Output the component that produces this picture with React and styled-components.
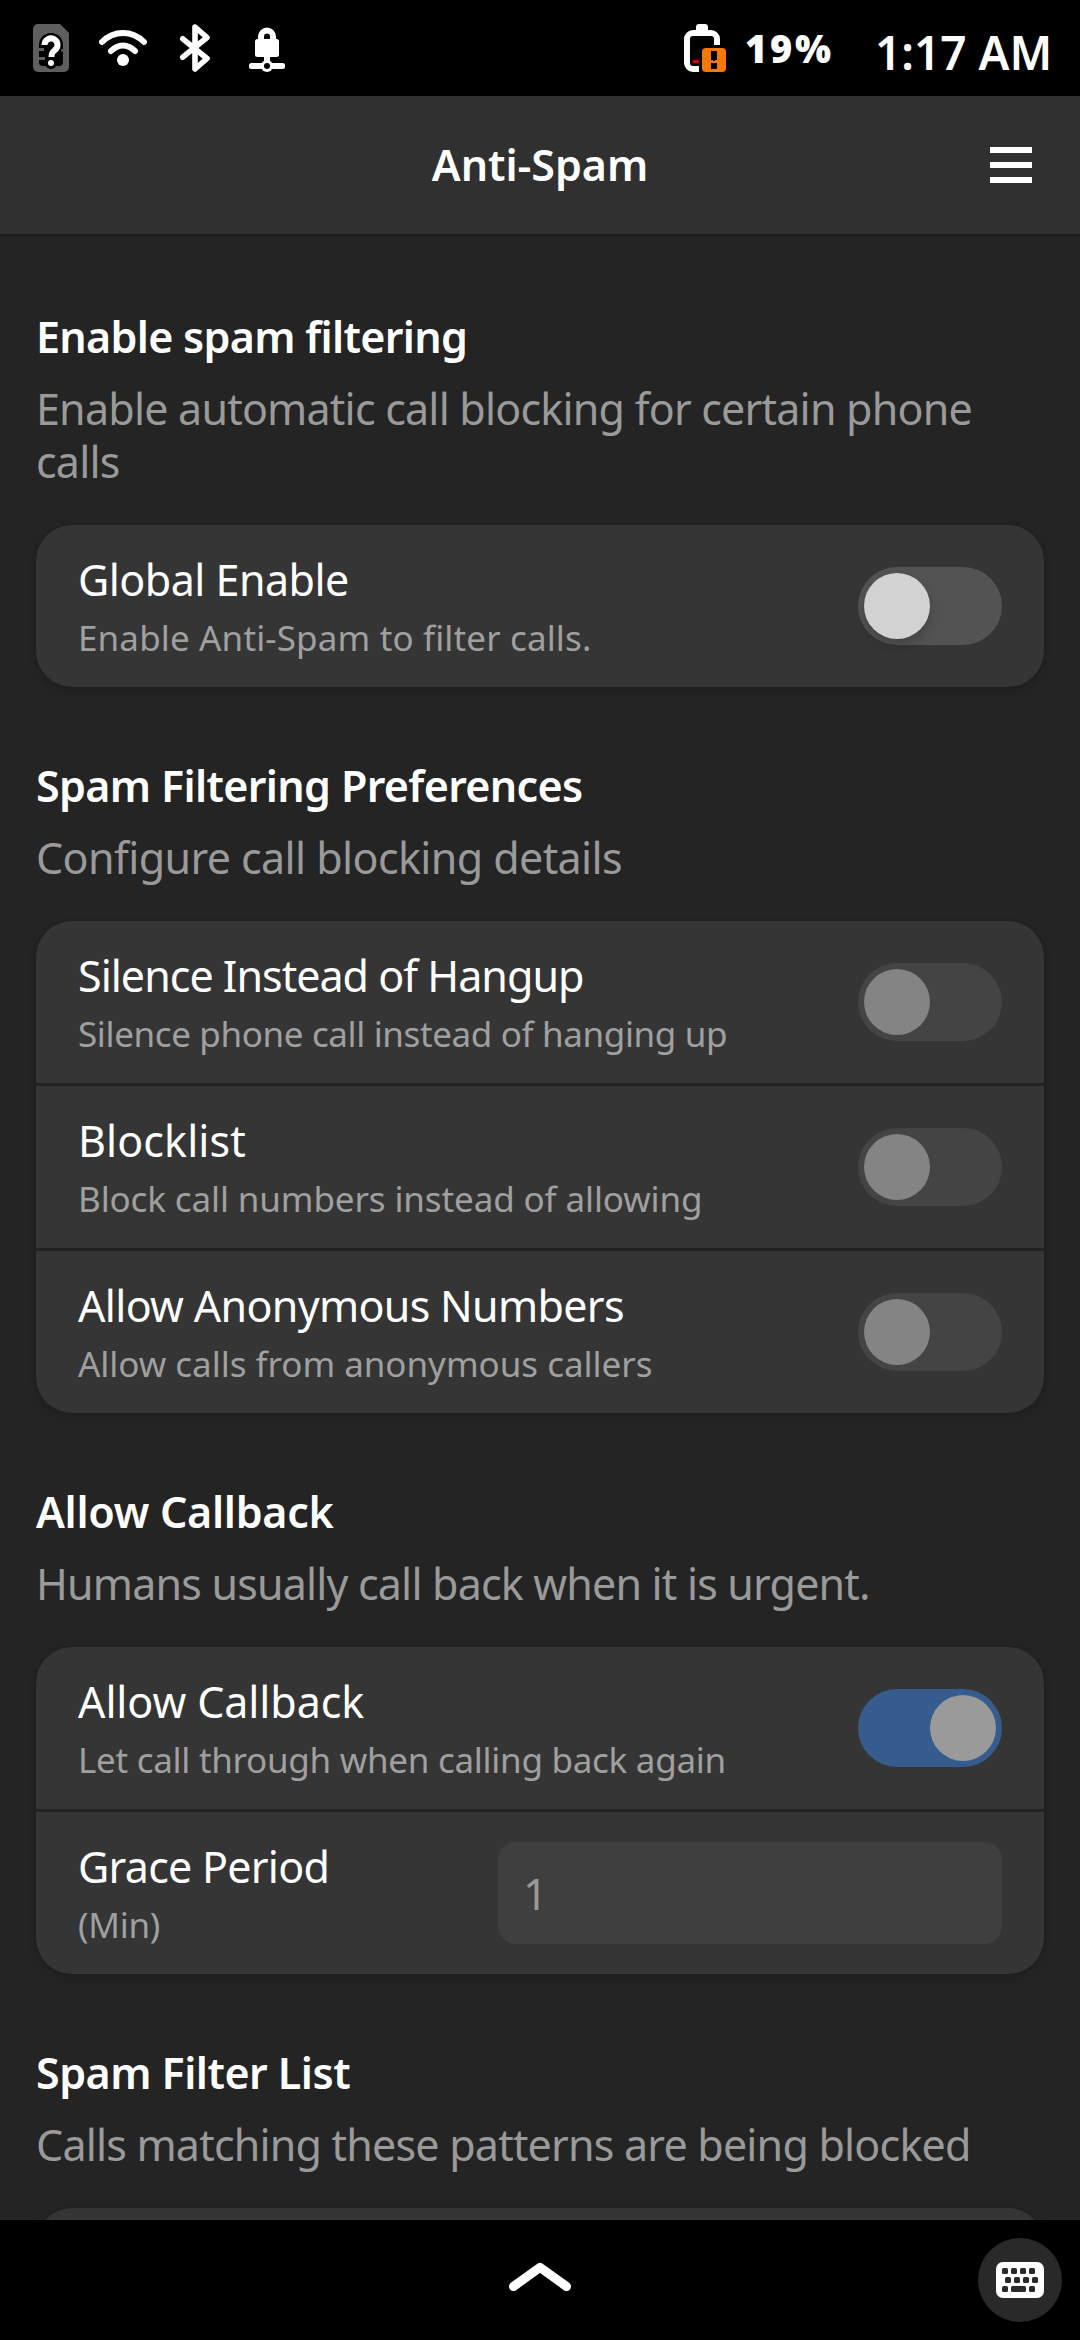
import React from "react";
import styled, { createGlobalStyle } from "styled-components";

const GlobalStyle = createGlobalStyle`
  * { box-sizing: border-box; }
  html, body, #root { margin: 0; padding: 0; height: 100%; }
  body {
    background: #000;
    color: #fff;
    font-family: "Noto Sans", "Open Sans", sans-serif;
    overflow: hidden;
  }
`;

const Screen = styled.div`
  width: 1080px;
  height: 2340px;
  display: flex;
  flex-direction: column;
  background: #242424;
  overflow: hidden;
`;

const StatusBar = styled.header`
  flex: none;
  height: 96px;
  display: flex;
  align-items: center;
  justify-content: space-between;
  padding: 0 0 0 27px;
  background: #000;
`;

const StatusGroup = styled.div`
  display: flex;
  align-items: center;
  gap: ${(p) => p.$gap || 0}px;
`;

const StatusIcon = styled.svg`
  display: block;
  width: 48px;
  height: 48px;
`;

const Battery = styled.span`
  width: 149px;
  padding-left: 19px;
  line-height: 96px;
  font-size: 38px;
  font-weight: 900;
  letter-spacing: 2.7px;
  white-space: nowrap;
`;

const Clock = styled.span`
  width: 205px;
  padding-top: 7px;
  line-height: 96px;
  font-size: 46px;
  font-weight: 600;
  letter-spacing: 0;
  white-space: nowrap;
`;

const HeaderBar = styled.div`
  flex: none;
  height: 141px;
  display: grid;
  grid-template-columns: 90px 1fr 90px;
  align-items: center;
  background: #303030;
  border-bottom: 3px solid #1f1f1f;
`;

const HeaderTitle = styled.h1`
  grid-column: 2;
  margin: 0;
  text-align: center;
  font-size: 43px;
  line-height: 54px;
  font-weight: 600;
  letter-spacing: -0.05px;
`;

const MenuButton = styled.button`
  width: 42px;
  height: 36px;
  padding: 0;
  border: 0;
  background: none;
  display: flex;
  flex-direction: column;
  justify-content: space-between;
`;

const MenuLine = styled.span`
  height: 6px;
  width: 42px;
  background: #fff;
`;

const Content = styled.main`
  flex: 1;
  min-height: 0;
  overflow: hidden;
  padding: 1px 36px 0;
`;

const Group = styled.section`
  padding-top: 72px;
`;

const GroupTitle = styled.h2`
  margin: 0 0 19px;
  font-size: 43px;
  line-height: 53px;
  font-weight: 600;
  letter-spacing: ${(p) => p.$track}px;
`;

const GroupText = styled.p`
  margin: 0 0 37px;
  color: #9a9a9a;
  font-size: 43px;
  line-height: 53px;
  letter-spacing: ${(p) => p.$track}px;
`;

const Card = styled.div`
  border-radius: 36px;
  background: #353535;
  box-shadow: 0 3px 9px 2px rgba(0, 0, 0, 0.14), 0 0 0 1px rgba(0, 0, 0, 0.04);
`;

const Row = styled.div`
  height: 162px;
  display: flex;
  align-items: center;
  justify-content: space-between;
  padding: 0 42px;

  & + & {
    height: 165px;
    border-top: 3px solid #222;
  }
`;

const Labels = styled.div`
  display: flex;
  flex-direction: column;
  gap: 10px;
  white-space: nowrap;
`;

const RowTitle = styled.span`
  font-size: 43px;
  line-height: 53px;
  letter-spacing: ${(p) => p.$track}px;
`;

const RowText = styled.span`
  color: #a0a0a0;
  font-size: 35px;
  line-height: 44px;
  letter-spacing: ${(p) => p.$track}px;
`;

const Toggle = styled.span`
  flex: none;
  width: 144px;
  height: 78px;
  padding: 6px;
  border-radius: 39px;
  display: flex;
  justify-content: ${(p) => (p.$on ? "flex-end" : "flex-start")};
  background: ${(p) => (p.$on ? "#365c8e" : p.$enabled ? "#535353" : "#444")};
`;

const Knob = styled.span`
  width: 66px;
  height: 66px;
  border-radius: 50%;
  background: ${(p) => (p.$enabled ? "#d2d2d2" : p.$on ? "#9a9a9a" : "#848484")};
  box-shadow: ${(p) => (p.$enabled ? "0 6px 12px rgba(0, 0, 0, 0.2)" : "none")};
`;

const Entry = styled.div`
  width: 504px;
  height: 102px;
  padding: 0 25px;
  display: flex;
  align-items: center;
  border-radius: 18px;
  background: #3f3f3f;
  color: #9a9a9a;
  font-size: 43px;
  line-height: 53px;
`;

const BottomBar = styled.footer`
  flex: none;
  height: 120px;
  display: grid;
  grid-template-columns: 102px 1fr 102px;
  align-items: center;
  background: #000;
`;

const HomeArrow = styled.svg`
  grid-column: 2;
  justify-self: center;
  width: 72px;
  height: 48px;
`;

const KeyboardButton = styled.button`
  width: 84px;
  height: 84px;
  padding: 0;
  border: 0;
  border-radius: 50%;
  background: #292929;
  display: grid;
  place-items: center;
`;

const KeyboardIcon = styled.svg`
  display: block;
  width: 48px;
  height: 36px;
`;

const SimIcon = () => (
  <StatusIcon viewBox="0 0 48 48">
    <path d="M11 0h22l9 9v34a5 5 0 0 1-5 5H11a5 5 0 0 1-5-5V5a5 5 0 0 1 5-5z" fill="#5e5e5e" />
    <path d="M12 21C12 14 17 9 24 9s12 5 12 12v17a4 4 0 0 1-4 4H16a4 4 0 0 1-4-4z" fill="#000" />
    <path d="M12 24h5v3h-5zM12 33h6v3h-6zM34 25.500h2v2h-2z" fill="#5e5e5e" />
    <circle cx="24" cy="39" r="6" fill="#000" />
    <path d="M17.500 21a6.500 6.500 0 1 1 10 5.400c-2.200 1.500-3 2.600-3 6.600" fill="none" stroke="#fff" strokeWidth="6" />
    <circle cx="24" cy="39" r="3" fill="#fff" />
  </StatusIcon>
);

const WifiIcon = () => (
  <StatusIcon viewBox="0 0 48 48">
    <g fill="none" stroke="#fff" strokeWidth="6" strokeLinecap="round">
      <path d="M3 18c12-12 30-12 42 0" />
      <path d="M12 27c7-7.500 17-7.500 24 0" />
    </g>
    <circle cx="24" cy="36" r="6" fill="#fff" />
  </StatusIcon>
);

const BluetoothIcon = () => (
  <StatusIcon viewBox="0 0 48 48">
    <path
      d="M11.800 14.800 36 34.500 24 45V3l12 10.500L11.800 33.200"
      fill="none"
      stroke="#fff"
      strokeWidth="5.600"
      strokeLinecap="round"
      strokeLinejoin="round"
    />
  </StatusIcon>
);

const VpnIcon = () => (
  <StatusIcon viewBox="0 0 48 48">
    <path d="M18 17v-4.500a6 6 0 0 1 12 0V17" fill="none" stroke="#fff" strokeWidth="6" />
    <rect x="12" y="15" width="24" height="18" rx="2.500" fill="#fff" />
    <path d="M21 32h6v6h-6z" fill="#fff" />
    <rect x="6" y="39" width="36" height="6" rx="2.500" fill="#fff" />
    <circle cx="24" cy="42" r="6" fill="#fff" />
    <circle cx="24" cy="42" r="3" fill="#000" />
  </StatusIcon>
);

const BatteryIcon = () => (
  <StatusIcon viewBox="0 0 48 48">
    <path d="M18 8V3a3 3 0 0 1 3-3h6a3 3 0 0 1 3 3v5z" fill="#fff" />
    <path d="M39 21v-6a6 6 0 0 0-6-6H15a6 6 0 0 0-6 6v24a6 6 0 0 0 6 6h6" fill="none" stroke="#fff" strokeWidth="6" />
    <path d="M15 36h6v3h-6z" fill="#c00" />
    <rect x="24" y="24" width="24" height="24" rx="4" fill="#f57900" />
    <path d="M33 27h6v9h-2v1h-2v-1h-2zM33 39h6v6h-6z" fill="#000" />
  </StatusIcon>
);

const KEYS = [
  [6, 6], [15, 6], [24, 6], [33, 6],
  [9, 15], [18, 15], [27, 15], [36, 15],
  [6, 24], [15, 24, 15], [33, 24],
];

const GROUPS = [
  {
    title: "Enable spam filtering",
    track: -0.7,
    text: "Enable automatic call blocking for certain phone calls",
    textTrack: -0.79,
    rows: [
      { title: "Global Enable", track: -0.53, text: "Enable Anti-Spam to filter calls.", textTrack: 0.14, enabled: true },
    ],
  },
  {
    title: "Spam Filtering Preferences",
    track: -0.65,
    text: "Configure call blocking details",
    textTrack: -0.6,
    rows: [
      { title: "Silence Instead of Hangup", track: -0.98, text: "Silence phone call instead of hanging up", textTrack: -0.37 },
      { title: "Blocklist", track: 0.1, text: "Block call numbers instead of allowing", textTrack: -0.12 },
      { title: "Allow Anonymous Numbers", track: -0.68, text: "Allow calls from anonymous callers", textTrack: -0.03 },
    ],
  },
  {
    title: "Allow Callback",
    track: -0.3,
    text: "Humans usually call back when it is urgent.",
    textTrack: -0.82,
    rows: [
      { title: "Allow Callback", track: -0.1, text: "Let call through when calling back again", textTrack: -0.28, on: true },
      { title: "Grace Period", track: -0.73, text: "(Min)", textTrack: -0.3, value: "1" },
    ],
  },
  {
    title: "Spam Filter List",
    track: -0.52,
    text: "Calls matching these patterns are being blocked",
    textTrack: -0.8,
    rows: [{}],
  },
];

function SettingRow({ row }) {
  return (
    <Row>
      <Labels>
        <RowTitle $track={row.track || 0}>{row.title}</RowTitle>
        <RowText $track={row.textTrack || 0}>{row.text}</RowText>
      </Labels>
      {row.value ? (
        <Entry>{row.value}</Entry>
      ) : row.title ? (
        <Toggle $on={row.on} $enabled={row.enabled}>
          <Knob $on={row.on} $enabled={row.enabled} />
        </Toggle>
      ) : null}
    </Row>
  );
}

export default function App() {
  return (
    <>
      <GlobalStyle />
      <Screen>
        <StatusBar>
          <StatusGroup $gap={24}>
            <SimIcon />
            <WifiIcon />
            <BluetoothIcon />
            <VpnIcon />
          </StatusGroup>
          <StatusGroup>
            <BatteryIcon />
            <Battery>19%</Battery>
            <Clock>1:17 AM</Clock>
          </StatusGroup>
        </StatusBar>
        <HeaderBar>
          <HeaderTitle>Anti-Spam</HeaderTitle>
          <MenuButton aria-label="Menu">
            <MenuLine />
            <MenuLine />
            <MenuLine />
          </MenuButton>
        </HeaderBar>
        <Content>
          {GROUPS.map((group) => (
            <Group key={group.title}>
              <GroupTitle $track={group.track}>{group.title}</GroupTitle>
              <GroupText $track={group.textTrack}>{group.text}</GroupText>
              <Card>
                {group.rows.map((row, i) => (
                  <SettingRow key={i} row={row} />
                ))}
              </Card>
            </Group>
          ))}
        </Content>
        <BottomBar>
          <HomeArrow viewBox="0 0 72 48">
            <path
              d="M9.500 30.500 36 11.300l26.500 19.200"
              fill="none"
              stroke="#fff"
              strokeWidth="9"
              strokeLinecap="round"
              strokeLinejoin="round"
            />
          </HomeArrow>
          <KeyboardButton aria-label="Keyboard">
            <KeyboardIcon viewBox="0 0 48 36">
              <rect width="48" height="36" rx="7" fill="#fff" />
              {KEYS.map(([x, y, w = 6]) => (
                <rect key={`${x}-${y}`} x={x} y={y} width={w} height="6" rx="1.500" fill="#292929" />
              ))}
            </KeyboardIcon>
          </KeyboardButton>
        </BottomBar>
      </Screen>
    </>
  );
}
